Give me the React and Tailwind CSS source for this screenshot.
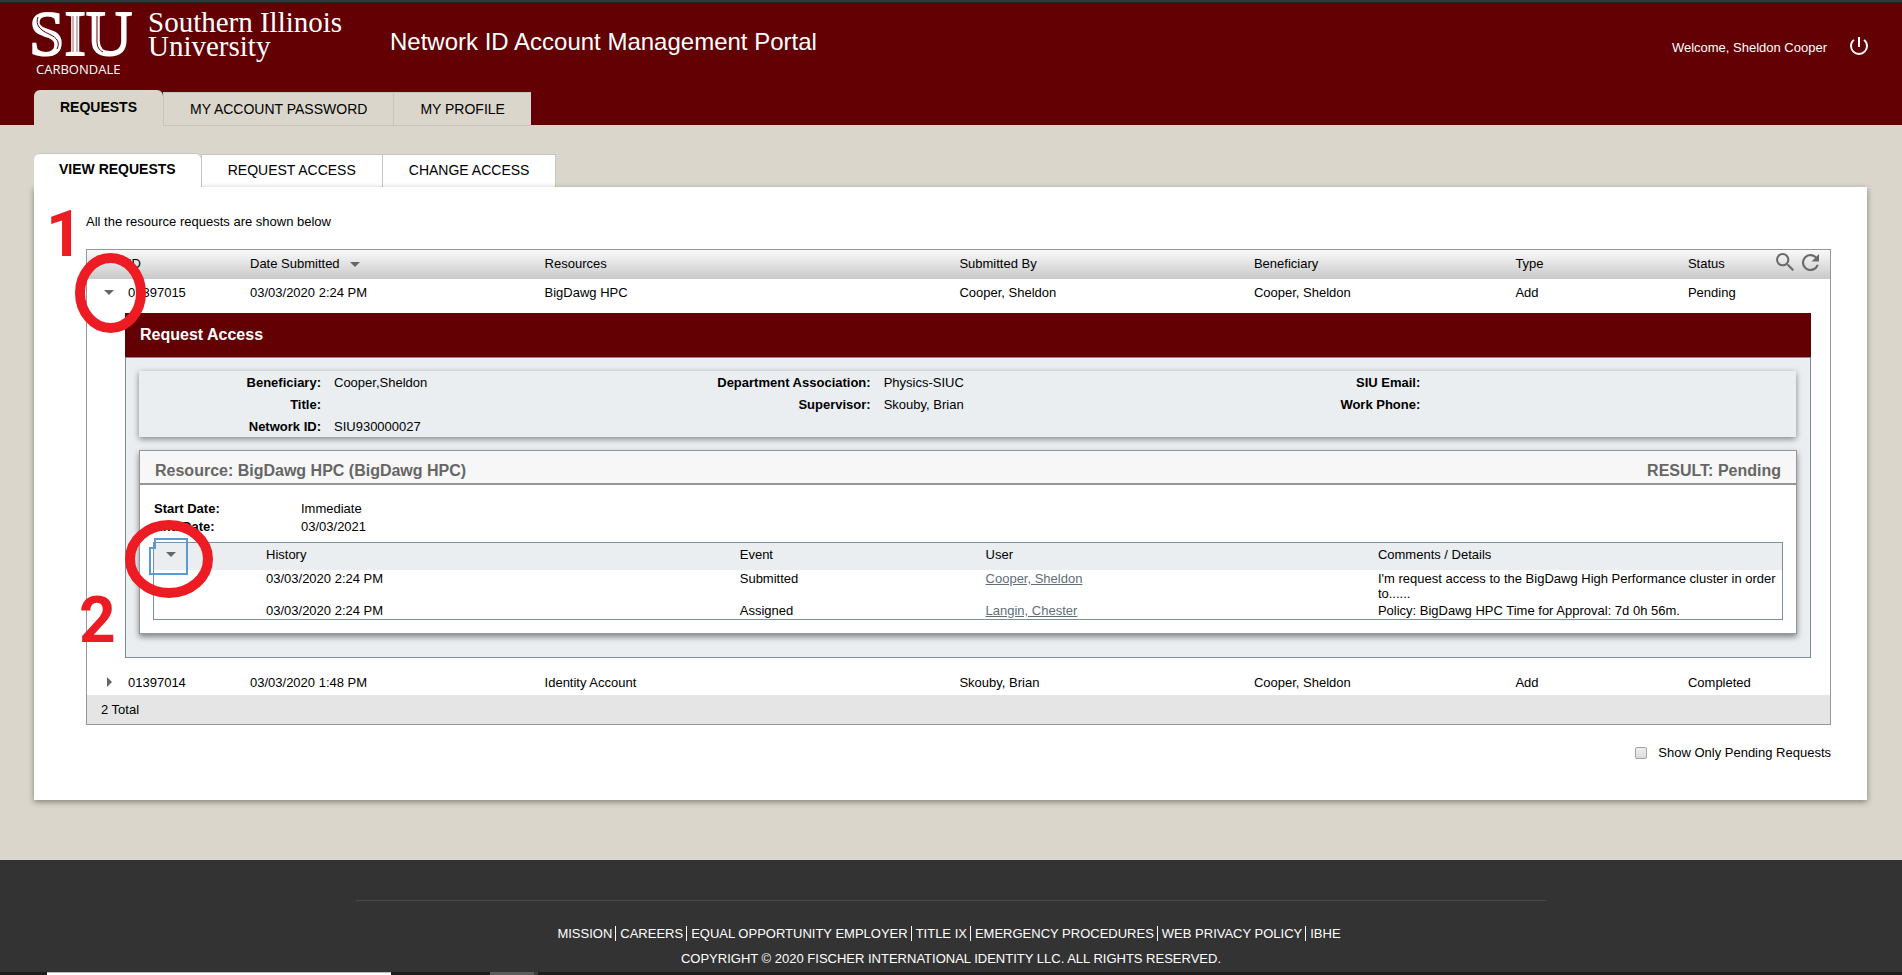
import React, { useState } from 'react';

const mainTabs = ['MY ACCOUNT PASSWORD', 'MY PROFILE'];
const subTabs = ['REQUEST ACCESS', 'CHANGE ACCESS'];

const requests = [
  {
    id: '01397015',
    date: '03/03/2020 2:24 PM',
    resource: 'BigDawg HPC',
    submittedBy: 'Cooper, Sheldon',
    beneficiary: 'Cooper, Sheldon',
    type: 'Add',
    status: 'Pending',
  },
  {
    id: '01397014',
    date: '03/03/2020 1:48 PM',
    resource: 'Identity Account',
    submittedBy: 'Skouby, Brian',
    beneficiary: 'Cooper, Sheldon',
    type: 'Add',
    status: 'Completed',
  },
];

const history = [
  {
    date: '03/03/2020 2:24 PM',
    event: 'Submitted',
    user: 'Cooper, Sheldon',
    comments: "I'm request access to the BigDawg High Performance cluster in order to......",
  },
  {
    date: '03/03/2020 2:24 PM',
    event: 'Assigned',
    user: 'Langin, Chester',
    comments: 'Policy: BigDawg HPC Time for Approval: 7d 0h 56m.',
  },
];

const footerLinks = [
  'MISSION',
  'CAREERS',
  'EQUAL OPPORTUNITY EMPLOYER',
  'TITLE IX',
  'EMERGENCY PROCEDURES',
  'WEB PRIVACY POLICY',
  'IBHE',
];

function DownArrow() {
  return (
    <svg width="10" height="5" viewBox="0 0 10 5" fill="#666">
      <path d="M0 0h10L5 5z" />
    </svg>
  );
}

function RightArrow() {
  return (
    <svg width="5" height="10" viewBox="0 0 5 10" fill="#666">
      <path d="M0 0v10l5-5z" />
    </svg>
  );
}

function Logo() {
  return (
    <svg className="overflow-visible" width="320" height="84" viewBox="0 0 320 84" fill="#fff" role="img" aria-label="SIU Southern Illinois University Carbondale">
      <text x="-2" y="52" fontFamily="Liberation Serif, serif" fontSize="64" stroke="#fff" strokeWidth="2">SIU</text>
      {/* inline strokes of the letters */}
      <g fill="none" stroke="#630003" strokeWidth="1">
        <path d="M7 14c-3 8 2 13 11 17s11 9 8 15" />
        <path d="M42 13v36M46 13v36" opacity="0.6" />
        <path d="M66 13v25c0 6 2 9 6 11" />
      </g>
      <text x="117" y="29" fontFamily="Liberation Serif, serif" fontSize="29">Southern Illinois</text>
      <text x="117" y="53" fontFamily="Liberation Serif, serif" fontSize="29">University</text>
      <text x="5" y="71" fontFamily="Open Sans, sans-serif" fontSize="13">CARBONDALE</text>
    </svg>
  );
}

function Header() {
  return (
    <header className="bg-[#630003] text-white">
      <div className="flex h-[87px] items-start pl-[31px] pr-[34px]">
        <div className="w-[359px] shrink-0">
          <Logo />
        </div>
        <h1 className="mt-[23px] flex-1 text-2xl leading-8">Network ID Account Management Portal</h1>
        <span className="mt-[35px] leading-5">Welcome, Sheldon Cooper</span>
        <button aria-label="Log out" className="ml-[23px] mt-[34px]">
          <svg width="18" height="18" viewBox="3 3 18 18" fill="#fff">
            <path d="M13 3h-2v10h2V3zm4.83 2.17l-1.42 1.42A6.92 6.92 0 0 1 19 12c0 3.87-3.13 7-7 7s-7-3.13-7-7c0-2.18 1-4.12 2.58-5.42L6.17 5.17A8.93 8.93 0 0 0 3 12a9 9 0 0 0 18 0c0-2.74-1.23-5.18-3.17-6.83z" />
          </svg>
        </button>
      </div>
      <nav className="flex items-end pl-[34px] text-sm text-black">
        <a href="#requests" className="h-[35px] rounded-t-md bg-[#dad6cb] px-[26px] pt-[7px] font-bold">
          REQUESTS
        </a>
        {mainTabs.map((tab) => (
          <a
            key={tab}
            href="#tab"
            className="-mb-px h-[34px] border border-r-0 border-[#c6c6c0] bg-[#dad6cb] px-[26px] pt-[6px]"
          >
            {tab}
          </a>
        ))}
      </nav>
    </header>
  );
}

function Info({ label, value }) {
  return (
    <div className="flex h-[22px]">
      <dt className="w-[182px] text-right font-bold">{label}:</dt>
      <dd className="pl-[13px]">{value}</dd>
    </div>
  );
}

function HistoryTable() {
  return (
    <div className="relative border border-[#7a919c]">
      <table className="w-full table-fixed text-left leading-[15px]">
        <colgroup>
          <col className="w-[112px]" />
          <col className="w-[29.1%]" />
          <col className="w-[15.1%]" />
          <col className="w-[24.1%]" />
          <col />
        </colgroup>
        <thead className="bg-[#eaeef1]">
          <tr>
            <th className="pt-1 pb-2 pl-3">
              <button aria-label="Collapse history" className="block">
                <DownArrow />
              </button>
            </th>
            <th className="pt-1 pb-2 font-normal">History</th>
            <th className="pt-1 pb-2 font-normal">Event</th>
            <th className="pt-1 pb-2 font-normal">User</th>
            <th className="pt-1 pb-2 font-normal">Comments / Details</th>
          </tr>
        </thead>
        <tbody>
          {history.map((item) => (
            <tr key={item.event} className="align-top">
              <td></td>
              <td className="py-px">{item.date}</td>
              <td className="py-px">{item.event}</td>
              <td className="py-px">
                <a href="#user" className="text-[#5f6e78] underline">{item.user}</a>
              </td>
              <td className="py-px">{item.comments}</td>
            </tr>
          ))}
        </tbody>
      </table>
      {/* focus ring around the expander */}
      <svg className="pointer-events-none absolute -left-[5px] -top-[5px]" width="40" height="38" fill="none" stroke="#5b9bd5" strokeWidth="2">
        <path d="M6 1h32v35H1V10h5z" />
      </svg>
    </div>
  );
}

function RequestDetail() {
  return (
    <section>
      <h2 className="bg-[#630003] px-[15px] py-[10px] text-base font-bold text-white">Request Access</h2>
      <div className="border border-[#7a919c] bg-[#eaeef1] px-[13px] pt-[13px] pb-[23px]">
        <dl className="mr-px grid grid-cols-3 pr-2 leading-6 shadow-[0_2px_6px_0_rgba(0,0,0,0.45)]">
          <div>
            <Info label="Beneficiary" value="Cooper,Sheldon" />
            <Info label="Title" />
            <Info label="Network ID" value="SIU930000027" />
          </div>
          <div>
            <Info label="Department Association" value="Physics-SIUC" />
            <Info label="Supervisor" value="Skouby, Brian" />
          </div>
          <div>
            <Info label="SIU Email" />
            <Info label="Work Phone" />
          </div>
        </dl>

        <div className="mt-[13px] border border-[#979797] bg-white shadow-[0_3px_6px_0_rgba(0,0,0,0.45)]">
          <div className="flex justify-between border-b-2 border-[#979797] bg-[#f7f7f7] px-[15px] pt-2 text-base font-bold text-[#666]">
            <h3>Resource: BigDawg HPC (BigDawg HPC)</h3>
            <span>RESULT: Pending</span>
          </div>
          <div className="px-[13px] pt-[15px] pb-[13px]">
            <dl className="mb-[6px] grid grid-cols-[147px_1fr] pl-px leading-[18px]">
              <dt className="font-bold">Start Date:</dt>
              <dd>Immediate</dd>
              <dt className="font-bold">End Date:</dt>
              <dd>03/03/2021</dd>
            </dl>
            <HistoryTable />
          </div>
        </div>
      </div>
    </section>
  );
}

function RequestsTable({ rows }) {
  const [openId, setOpenId] = useState('01397015');

  return (
    <div className="mt-[18px] border border-[#979797]">
      <table className="w-full table-fixed text-left">
        <colgroup>
          <col className="w-[41px]" />
          <col className="w-[7%]" />
          <col className="w-[16.9%]" />
          <col className="w-[23.8%]" />
          <col className="w-[16.9%]" />
          <col className="w-[15%]" />
          <col className="w-[9.9%]" />
          <col />
        </colgroup>
        <thead>
          <tr className="h-[29px] bg-linear-to-b from-[#fafafa] to-[#c9c9c9]">
            <th></th>
            <th className="pb-px font-normal">ID</th>
            <th className="pb-px font-normal">
              <button className="flex items-center gap-[10px]">
                Date Submitted <DownArrow />
              </button>
            </th>
            <th className="pb-px font-normal">Resources</th>
            <th className="pb-px font-normal">Submitted By</th>
            <th className="pb-px font-normal">Beneficiary</th>
            <th className="pb-px font-normal">Type</th>
            <th className="pb-px font-normal">
              <div className="flex items-center justify-between pr-[11px]">
                Status
                <span className="flex gap-2 pb-1">
                  <button aria-label="Search">
                    <svg width="18" height="18" viewBox="3 3 17.5 17.5" fill="#6a6a6a">
                      <path d="M15.5 14h-.79l-.28-.27A6.47 6.47 0 0 0 16 9.5 6.5 6.5 0 1 0 9.5 16c1.61 0 3.09-.59 4.23-1.57l.27.28v.79l5 4.99L20.49 19l-4.99-5zm-6 0a4.5 4.5 0 1 1 0-9 4.5 4.5 0 0 1 0 9z" />
                    </svg>
                  </button>
                  <button aria-label="Refresh">
                    <svg width="17" height="17" viewBox="4 4 16 16" fill="#6a6a6a">
                      <path d="M17.65 6.35A7.96 7.96 0 0 0 12 4a8 8 0 1 0 7.73 10h-2.08A6 6 0 1 1 12 6c1.66 0 3.14.69 4.22 1.78L13 11h7V4l-2.35 2.35z" />
                    </svg>
                  </button>
                </span>
              </div>
            </th>
          </tr>
        </thead>
        <tbody>
          {rows.map((row) => {
            const open = row.id === openId;
            const cell = open ? 'pt-[5px] pb-[11px]' : 'pt-4 pb-[3px]';
            return (
              <React.Fragment key={row.id}>
                <tr className="leading-[18px]">
                  <td className="pl-[17px]">
                    <button
                      aria-label={open ? 'Collapse request' : 'Expand request'}
                      className={open ? 'block pb-2' : 'block pl-[3px] pt-[10px]'}
                      onClick={() => setOpenId(open ? null : row.id)}
                    >
                      {open ? <DownArrow /> : <RightArrow />}
                    </button>
                  </td>
                  <td className={cell}>{row.id}</td>
                  <td className={cell}>{row.date}</td>
                  <td className={cell}>{row.resource}</td>
                  <td className={cell}>{row.submittedBy}</td>
                  <td className={cell}>{row.beneficiary}</td>
                  <td className={cell}>{row.type}</td>
                  <td className={cell}>{row.status}</td>
                </tr>
                {open && (
                  <tr>
                    <td colSpan={8} className="pl-[38px] pr-[19px]">
                      <RequestDetail />
                    </td>
                  </tr>
                )}
              </React.Fragment>
            );
          })}
        </tbody>
      </table>
      <div className="bg-[#e5e5e5] pt-[6px] pb-[5px] pl-[14px] leading-[18px]">{rows.length} Total</div>
    </div>
  );
}

// Red step markers drawn over the two expanders
function StepMarkers() {
  return (
    <div className="pointer-events-none absolute inset-0 font-[Roboto,sans-serif] text-[64px] leading-[64px] font-bold text-[#ed1c24]">
      <svg className="absolute left-[41px] top-[66px]" width="71" height="80" fill="none" stroke="#ed1c24" strokeWidth="10">
        <ellipse cx="35.5" cy="40" rx="30.5" ry="35" />
      </svg>
      <svg className="absolute left-[91px] top-[333px]" width="88" height="78" fill="none" stroke="#ed1c24" strokeWidth="10">
        <ellipse cx="44" cy="39" rx="39" ry="34" />
      </svg>
      <span className="absolute left-3 top-4">1</span>
      <span className="absolute left-[45px] top-[402px]">2</span>
    </div>
  );
}

function Footer() {
  return (
    <footer className="flex h-[112px] flex-col items-center bg-[#333] text-white">
      <hr className="mt-10 w-[1190px] max-w-full border-[#4a4a4a]" />
      <nav className="mt-[25px] flex leading-[15px]">
        {footerLinks.map((link, i) => (
          <a
            key={link}
            href="#footer"
            className={i < footerLinks.length - 1 ? 'mr-1 border-r border-white pr-[3px]' : 'pr-1'}
          >
            {link}
          </a>
        ))}
      </nav>
      <p className="mt-[10px] leading-[15px]">COPYRIGHT © 2020 FISCHER INTERNATIONAL IDENTITY LLC. ALL RIGHTS RESERVED.</p>
    </footer>
  );
}

export default function App() {
  const [pendingOnly, setPendingOnly] = useState(false);
  const rows = pendingOnly ? requests.filter((r) => r.status === 'Pending') : requests;

  return (
    <div className="bg-[#dad6cb] font-['Liberation_Sans',Arial,sans-serif] text-[13px] text-black">
      <div className="h-[3px] border-b border-[#222] bg-[#35363a]" />
      <Header />

      <main className="pt-7 pr-[35px] pb-[60px] pl-[34px]">
        <nav className="flex items-end text-sm">
          <a href="#view" className="relative z-10 h-[34px] rounded-t-md border-t border-[#c6c6c0] bg-white px-[25px] pt-[5px] font-bold">
            VIEW REQUESTS
          </a>
          {subTabs.map((tab) => (
            <a key={tab} href="#sub" className="h-[33px] border border-b-0 border-[#c6c6c0] bg-white px-[26px] pt-[5px] not-last:border-r-0">
              {tab}
            </a>
          ))}
        </nav>

        <div className="relative bg-white pt-[26px] pr-9 pb-[38px] pl-[52px] shadow-[0_2px_6px_0_rgba(0,0,0,0.4)]">
          <p className="leading-[18px]">All the resource requests are shown below</p>
          <RequestsTable rows={rows} />
          <div className="mt-[19px] flex justify-end">
            <label className="flex items-center gap-[11px] leading-[18px]">
              <input
                type="checkbox"
                checked={pendingOnly}
                onChange={(e) => setPendingOnly(e.target.checked)}
                className="size-3 appearance-none rounded-xs border border-[#a5a5a5] bg-linear-to-b from-[#eee] to-[#dcdcdc] checked:bg-[#666]"
              />
              Show Only Pending Requests
            </label>
          </div>
          <StepMarkers />
        </div>
      </main>

      <Footer />

      {/* top edge of the taskbar */}
      <div className="flex h-[3px] bg-[#1c1c1c]">
        <div className="ml-[47px] w-[344px] border-t border-[#bbb] bg-white" />
        <div className="ml-[99px] w-11 bg-[#5c5c5c]" />
        <div className="w-1 bg-[#3c3c3c]" />
      </div>
    </div>
  );
}
